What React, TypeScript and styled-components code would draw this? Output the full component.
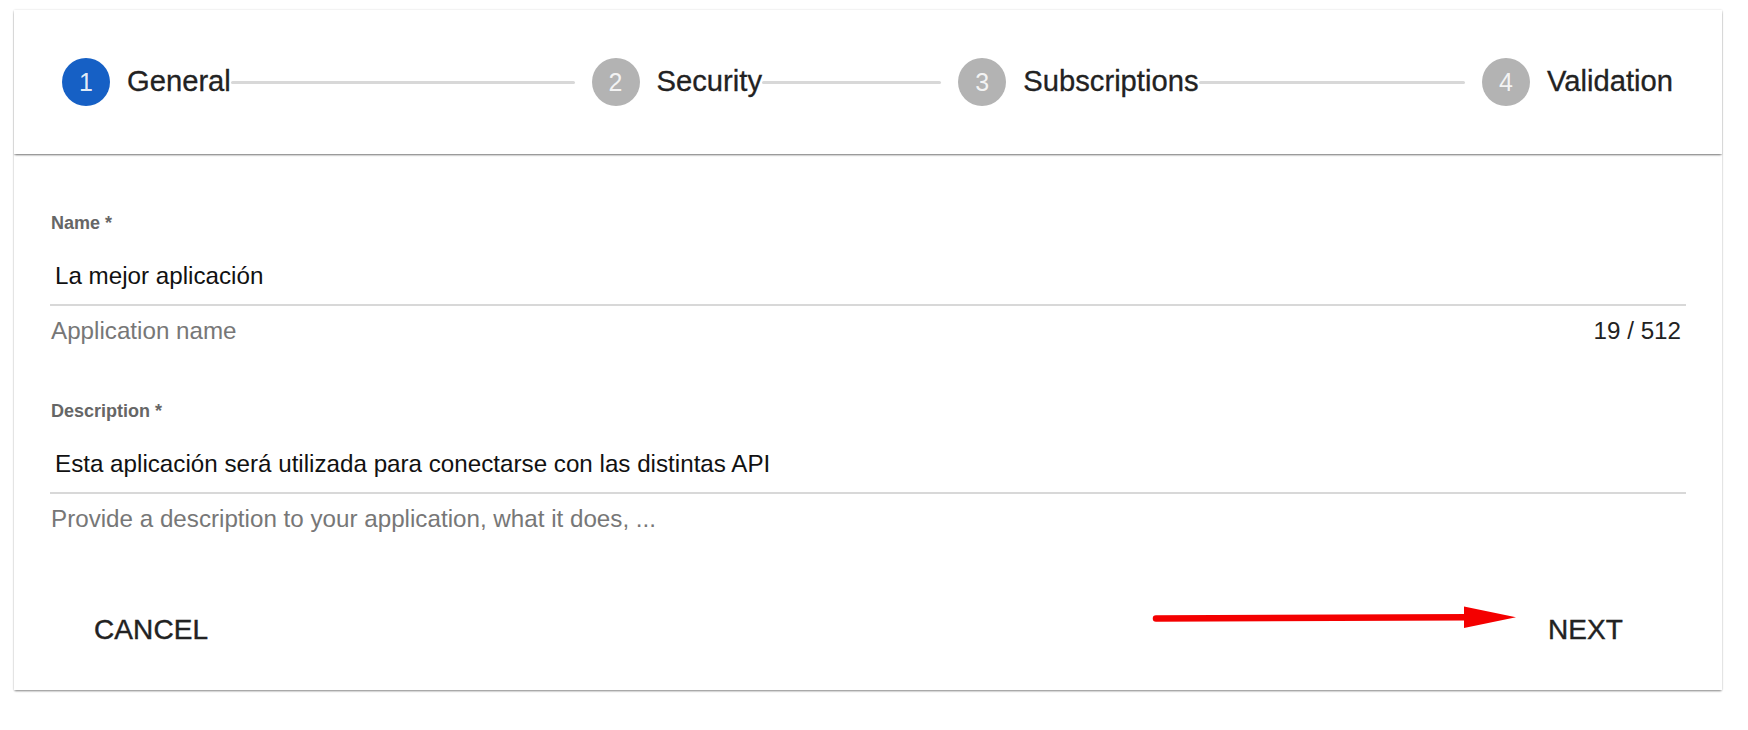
import React from 'react';
import styled, { createGlobalStyle } from 'styled-components';

const TEXT_COLOR = '#222222';
const LINE_COLOR = '#d8d8d8';

const GlobalStyle = createGlobalStyle`
  html, body {
    margin: 0;
    padding: 0;
    background: #ffffff;
    font-family: "Liberation Sans", Arial, Helvetica, sans-serif;
  }
`;

const Page = styled.div`
  padding: 10px 26px 40px 14px;
`;

const Card = styled.div`
  position: relative;
  width: 1708px;
  background: #ffffff;
  box-shadow: 0 2px 2px -1px rgba(0, 0, 0, 0.35), 0 1px 2px 0 rgba(0, 0, 0, 0.14),
    0 0 2px 0 rgba(0, 0, 0, 0.12);
`;

const StepperHeader = styled.div`
  position: relative;
  z-index: 1;
  display: flex;
  align-items: center;
  height: 144px;
  padding: 0 49px 0 48px;
  box-sizing: border-box;
  background: #ffffff;
  box-shadow: 0 2px 2px -1px rgba(0, 0, 0, 0.45), 0 1px 1px 0 rgba(0, 0, 0, 0.12);
`;

const Step = styled.div`
  display: flex;
  align-items: center;
  flex-shrink: 0;
`;

const StepCircle = styled.div<{ $active?: boolean }>`
  display: flex;
  align-items: center;
  justify-content: center;
  width: 48px;
  height: 48px;
  border-radius: 50%;
  background: ${(p) => (p.$active ? '#1660c5' : '#b3b3b3')};
  color: ${(p) => (p.$active ? 'rgba(255, 255, 255, 0.9)' : 'rgba(255, 255, 255, 0.85)')};
  font-size: 25px;
  line-height: 1;
`;

const StepLabel = styled.span`
  margin-left: 17px;
  font-size: 29.2px;
  line-height: 1;
  color: ${TEXT_COLOR};
  -webkit-text-stroke: 0.3px ${TEXT_COLOR};
`;

const Connector = styled.div<{ $grow: number }>`
  flex: ${(p) => p.$grow} 1 0;
  height: 3px;
  margin-right: 17px;
  border-radius: 2px;
  background: ${LINE_COLOR};
`;

const Body = styled.div`
  padding: 60px 36px 0 36px;
`;

const Field = styled.div<{ $gap?: number }>`
  display: flex;
  flex-direction: column;
  margin-top: ${(p) => p.$gap || 0}px;
`;

const FieldLabel = styled.label`
  padding-left: 1px;
  font-size: 18px;
  line-height: 18px;
  font-weight: 700;
  color: #666666;
`;

const FieldInput = styled.div`
  padding: 30px 5px 14px 5px;
  border-bottom: 2px solid ${LINE_COLOR};
  font-size: 24.2px;
  line-height: 28px;
  color: #111111;
`;

const HelperRow = styled.div`
  display: flex;
  justify-content: space-between;
  align-items: center;
  margin-top: 12px;
  padding: 0 5px 0 1px;
  font-size: 24.2px;
  line-height: 26px;
`;

const HelperText = styled.span`
  color: #777777;
`;

const Counter = styled.span`
  color: ${TEXT_COLOR};
`;

const Actions = styled.div`
  display: flex;
  justify-content: space-between;
  align-items: center;
  margin-top: 80px;
  padding: 0 83px 42px 64px;
`;

const TextButton = styled.button`
  padding: 0 16px;
  border: none;
  background: transparent;
  font-family: inherit;
  font-size: 28px;
  line-height: 36px;
  letter-spacing: 0.1px;
  color: ${TEXT_COLOR};
  -webkit-text-stroke: 0.4px ${TEXT_COLOR};
  text-transform: uppercase;
  cursor: pointer;
`;

const ArrowMark = styled.svg`
  position: absolute;
  left: 1136px;
  top: 590px;
  pointer-events: none;
`;

const steps = [
  { label: 'General', grow: 347 },
  { label: 'Security', grow: 181 },
  { label: 'Subscriptions', grow: 269 },
  { label: 'Validation', grow: 0 },
];

export default function App() {
  return (
    <Page>
      <GlobalStyle />
      <Card>
        <StepperHeader>
          {steps.map((step, index) => (
            <React.Fragment key={step.label}>
              <Step>
                <StepCircle $active={index === 0}>{index + 1}</StepCircle>
                <StepLabel>{step.label}</StepLabel>
              </Step>
              {step.grow > 0 && <Connector $grow={step.grow} />}
            </React.Fragment>
          ))}
        </StepperHeader>
        <Body>
          <Field>
            <FieldLabel>Name *</FieldLabel>
            <FieldInput>La mejor aplicación</FieldInput>
            <HelperRow>
              <HelperText>Application name</HelperText>
              <Counter>19 / 512</Counter>
            </HelperRow>
          </Field>
          <Field $gap={58}>
            <FieldLabel>Description *</FieldLabel>
            <FieldInput>Esta aplicación será utilizada para conectarse con las distintas API</FieldInput>
            <HelperRow>
              <HelperText>Provide a description to your application, what it does, ...</HelperText>
            </HelperRow>
          </Field>
        </Body>
        <Actions>
          <TextButton>Cancel</TextButton>
          <TextButton>Next</TextButton>
        </Actions>
        <ArrowMark width="370" height="40" viewBox="0 0 370 40">
          <path d="M6 18.5 L318 17.3" stroke="#f40000" strokeWidth="6.5" strokeLinecap="round" fill="none" />
          <polygon points="314,6.5 366,17.3 314,28" fill="#f40000" />
        </ArrowMark>
      </Card>
    </Page>
  );
}
